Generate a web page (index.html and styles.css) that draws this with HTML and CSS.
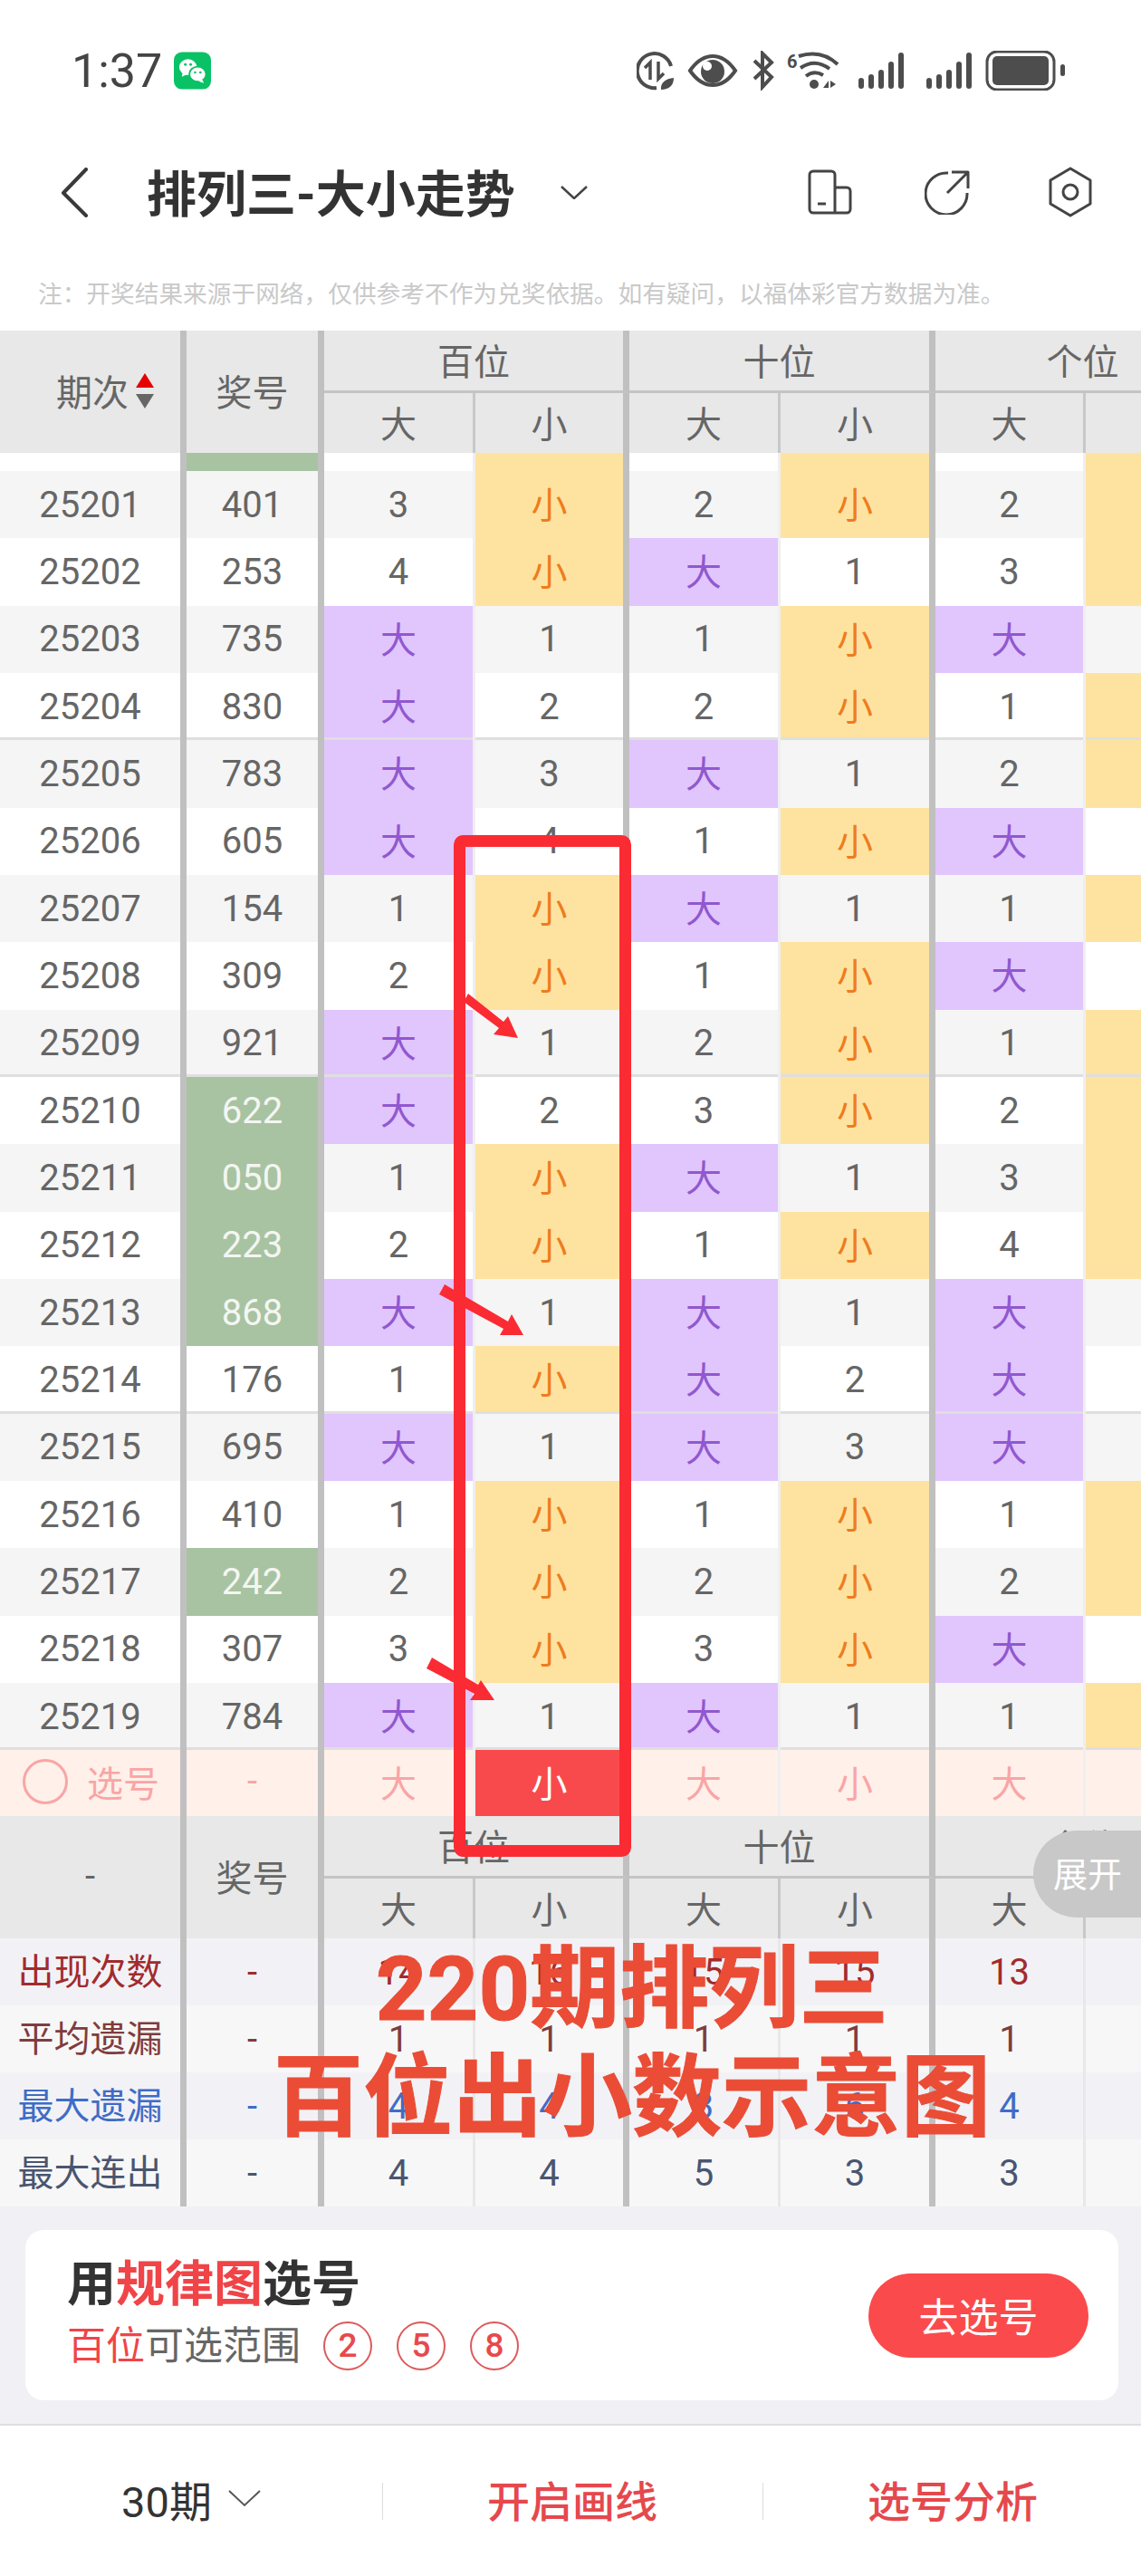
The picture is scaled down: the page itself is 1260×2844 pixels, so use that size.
FILE: index.html
```html
<!DOCTYPE html>
<html lang="zh-CN">
<head>
    <meta charset="UTF-8">
    <title>排列三-大小走势</title>
    <link rel="stylesheet" href="styles.css">
</head>
<body>
<div class="page">
    <div class="status">
        <span class="clock">1:37</span>
        <svg class="wechat" viewBox="0 0 42 42">
            <rect width="42" height="42" rx="9" fill="#0ac266"/>
            <ellipse cx="16" cy="17" rx="10" ry="9" fill="#fff"/>
            <path d="M10 23l-1 5 6-3z" fill="#fff"/>
            <ellipse cx="27" cy="25" rx="9.500" ry="8.500" fill="#fff" stroke="#0ac266" stroke-width="2"/>
            <path d="M32 31l2 4-6-2z" fill="#fff"/>
            <circle cx="13" cy="14" r="1.500" fill="#0ac266"/><circle cx="19" cy="14" r="1.500" fill="#0ac266"/>
            <circle cx="24" cy="23" r="1.300" fill="#0ac266"/><circle cx="30" cy="23" r="1.300" fill="#0ac266"/>
        </svg>
        <svg class="status-icons" viewBox="0 0 474 44" fill="none" stroke="#4d4d4d" stroke-width="4">
            <path d="M38 17A19 19 0 1 0 22 41"/>
            <path d="M15 32V13L9 19M24 12V31L30 25" stroke-width="3.500"/>
            <path d="M27 43C26 35 32 31 41 30C41 38 36 43 27 43Z" fill="#4d4d4d" stroke="none"/>
            <path d="M59 22C68 9 77 6 84 6C91 6 100 9 109 22C100 35 91 38 84 38C77 38 68 35 59 22Z"/>
            <circle cx="84" cy="23" r="13" fill="#4d4d4d" stroke="none"/>
            <circle cx="78" cy="17" r="5" fill="#fff" stroke="none"/>
            <path d="M130 11L149 29L139 40V3L149 13L130 31"/>
            <text x="166" y="19" font-size="20" font-weight="700" font-family="Roboto" fill="#4d4d4d" stroke="none">6</text>
            <path d="M179 6Q204 -2 222 15M181 19Q197 8 213 20M187 28Q196 21 206 27"/>
            <circle cx="196" cy="37" r="5" fill="#4d4d4d" stroke="none"/>
            <path d="M212 33V41H206ZM214 33V41L220 37Z" fill="#4d4d4d" stroke="none"/>
            <g fill="#4d4d4d" stroke="none">
                <rect x="245" y="30" width="6" height="12" rx="3"/><rect x="256" y="26" width="6" height="16" rx="3"/>
                <rect x="267" y="21" width="6" height="21" rx="3"/><rect x="278" y="12" width="6" height="30" rx="3"/>
                <rect x="289" y="2" width="6" height="40" rx="3"/>
                <rect x="320" y="30" width="6" height="12" rx="3"/><rect x="331" y="26" width="6" height="16" rx="3"/>
                <rect x="342" y="21" width="6" height="21" rx="3"/><rect x="353" y="12" width="6" height="30" rx="3"/>
                <rect x="364" y="2" width="6" height="40" rx="3"/>
                <rect x="393" y="6" width="62" height="32" rx="5"/>
                <rect x="468" y="15" width="5" height="13" rx="2.500"/>
            </g>
            <rect x="387" y="1" width="74" height="42" rx="11" stroke-width="3"/>
        </svg>
    </div>

    <div class="nav">
        <svg class="back" viewBox="0 0 30 55" fill="none" stroke="#3a3a3a" stroke-width="4" stroke-linecap="round" stroke-linejoin="round">
            <path d="M28 2L3 28L28 53"/>
        </svg>
        <h1 class="nav-title">排列三-大小走势</h1>
        <svg class="nav-caret" viewBox="0 0 30 15" fill="none" stroke="#444" stroke-width="2.500"><path d="M1 1L15 14L29 1"/></svg>
        <div class="nav-tools">
            <svg class="tool-device" viewBox="0 0 49 50" fill="none" stroke="#444" stroke-width="3">
                <path d="M30 48H6a4 4 0 0 1-4-4V6a4 4 0 0 1 4-4h20a4 4 0 0 1 4 4V48ZM30 20H43a4 4 0 0 1 4 4V44a4 4 0 0 1-4 4H30"/>
                <path d="M11 38H20"/>
            </svg>
            <svg class="tool-share" viewBox="0 0 50 50" fill="none" stroke="#444" stroke-width="3" stroke-linejoin="round">
                <path d="M26 4A23 23 0 1 0 47 26"/>
                <path d="M25 26L48 3M30 3H48V21"/>
            </svg>
            <svg class="tool-hex" viewBox="0 0 50 56" fill="none" stroke="#444" stroke-width="3" stroke-linejoin="round">
                <path d="M25 2L47 15V41L25 54L3 41V15Z"/>
                <circle cx="25" cy="28" r="8"/>
            </svg>
        </div>
    </div>

    <p class="note">注：开奖结果来源于网络，仅供参考不作为兑奖依据。如有疑问，以福体彩官方数据为准。</p>

    <div class="thead">
        <div class="th th-tall th-sort">期次
            <span class="sort"><i class="sort-up"></i><i class="sort-down"></i></span>
        </div>
        <div class="th th-tall">奖号</div>
        <div class="th th-group">百位</div>
        <div class="th th-group">十位</div>
        <div class="th th-group">个位</div>
        <div class="th th-sub">大</div><div class="th th-sub">小</div>
        <div class="th th-sub">大</div><div class="th th-sub">小</div>
        <div class="th th-sub">大</div><div class="th th-sub">小</div>
    </div>

    <div id="rows"></div>

    <div class="trow pick-row">
        <div class="c pick-label"><span class="pick-circle"></span>选号</div>
        <div class="c">-</div>
        <div class="c">大</div>
        <div class="c pick-on">小</div>
        <div class="c">大</div>
        <div class="c">小</div>
        <div class="c">大</div>
        <div class="c">小</div>
    </div>

    <div class="thead">
        <div class="th th-tall">-</div>
        <div class="th th-tall">奖号</div>
        <div class="th th-group">百位</div>
        <div class="th th-group">十位</div>
        <div class="th th-group">个位</div>
        <div class="th th-sub">大</div><div class="th th-sub">小</div>
        <div class="th th-sub">大</div><div class="th th-sub">小</div>
        <div class="th th-sub">大</div><div class="th th-sub">小</div>
    </div>

    <div id="stats"></div>

    <div class="lower">
        <div class="card">
            <div class="card-text">
                <div class="card-title">用<em>规律图</em>选号</div>
                <div class="card-sub"><em>百位</em>可选范围
                    <span class="ball">2</span><span class="ball">5</span><span class="ball">8</span>
                </div>
            </div>
            <div class="card-btn">去选号</div>
        </div>
    </div>

    <div class="bottom">
        <div class="bottom-item">30期
            <svg class="bottom-caret" viewBox="0 0 36 20" fill="none" stroke="#555" stroke-width="2"><path d="M1 2L18 18L35 2"/></svg>
        </div>
        <div class="bottom-item bottom-red">开启画线</div>
        <div class="bottom-item bottom-red">选号分析</div>
    </div>

    <!-- 手工标注层 -->
    <svg class="marks" viewBox="0 0 1260 2844">
        <rect x="507.500" y="928.500" width="183" height="1115" rx="4" fill="none" stroke="#fb2b34" stroke-width="13"/>
        <g fill="#fb2b34">
            <path d="M517 1097L556 1128L561 1122L572 1146L545 1142L551 1135L512 1106Z"/>
            <path d="M491 1418L561 1459L565 1451L578 1474L552 1474L556 1467L485 1429Z"/>
            <path d="M477 1830L528 1860L531 1855L546 1877L519 1877L524 1870L471 1842Z"/>
        </g>
    </svg>
    <div class="mark-text">220期排列三<br>百位出小数示意图</div>

    <div class="expand">展开</div>
</div>

<script>
    // 期次, 奖号, 是否绿色, 百大, 百小, 十大, 十小, 个大, 个小
    const dados = [
        ['25201', '401', 0, '3', '小', '2', '小', '2', '小'],
        ['25202', '253', 0, '4', '小', '大', '1', '3', '小'],
        ['25203', '735', 0, '大', '1', '1', '小', '大', '1'],
        ['25204', '830', 0, '大', '2', '2', '小', '1', '小'],
        ['25205', '783', 0, '大', '3', '大', '1', '2', '小'],
        ['25206', '605', 0, '大', '4', '1', '小', '大', '1'],
        ['25207', '154', 0, '1', '小', '大', '1', '1', '小'],
        ['25208', '309', 0, '2', '小', '1', '小', '大', '1'],
        ['25209', '921', 0, '大', '1', '2', '小', '1', '小'],
        ['25210', '622', 1, '大', '2', '3', '小', '2', '小'],
        ['25211', '050', 1, '1', '小', '大', '1', '3', '小'],
        ['25212', '223', 1, '2', '小', '1', '小', '4', '小'],
        ['25213', '868', 1, '大', '1', '大', '1', '大', '1'],
        ['25214', '176', 0, '1', '小', '大', '2', '大', '2'],
        ['25215', '695', 0, '大', '1', '大', '3', '大', '3'],
        ['25216', '410', 0, '1', '小', '1', '小', '1', '小'],
        ['25217', '242', 1, '2', '小', '2', '小', '2', '小'],
        ['25218', '307', 0, '3', '小', '3', '小', '大', '1'],
        ['25219', '784', 0, '大', '1', '大', '1', '1', '小']
    ];

    const estatisticas = [
        ['出现次数', 'st-red', '-', '14', '16', '15', '15', '13', '17'],
        ['平均遗漏', 'st-brown', '-', '1', '1', '1', '1', '1', '1'],
        ['最大遗漏', 'st-blue', '-', '4', '4', '3', '6', '4', '3'],
        ['最大连出', 'st-slate', '-', '4', '4', '5', '3', '3', '4']
    ];

    function celula(v) {
        if (v === '大') return '<div class="c big">大</div>';
        if (v === '小') return '<div class="c small">小</div>';
        return `<div class="c">${v}</div>`;
    }

    const rows = document.getElementById('rows');
    let html = `<div class="trow spacer"><div class="c"></div><div class="c hit"></div><div class="c"></div><div class="c small"></div><div class="c"></div><div class="c small"></div><div class="c"></div><div class="c small"></div></div>`;
    dados.forEach((d, i) => {
        const sep = i % 5 === 3 ? ' sep' : '';
        html += `<div class="trow${i % 2 === 0 ? ' odd' : ''}${sep}">
            <div class="c">${d[0]}</div>
            <div class="c${d[2] ? ' hit' : ''}">${d[1]}</div>
            ${d.slice(3).map(celula).join('')}
        </div>`;
    });
    rows.innerHTML = html;

    document.getElementById('stats').innerHTML = estatisticas.map((s, i) => `
        <div class="trow stat-row ${s[1]}${i % 2 === 0 ? ' stat-tint' : ''}">
            <div class="c">${s[0]}</div>
            ${s.slice(2).map(v => `<div class="c">${v}</div>`).join('')}
        </div>`).join('');
</script>
</body>
</html>
```

FILE: styles.css
```css
* { box-sizing: border-box; }
body { margin: 0; background: #fff; font-family: Roboto, "Noto Sans CJK SC", sans-serif; color: #666; }
.page { position: relative; width: 1260px; height: 2844px; overflow: hidden; background: #fff; }

/* status bar */
.status { display: flex; align-items: center; height: 156px; padding-left: 79px; }
.clock { font-size: 52px; color: #444; width: 113px; }
.wechat { width: 41px; height: 42px; }
.status-icons { width: 474px; height: 44px; margin-left: 470px; }

/* nav */
.nav { display: flex; align-items: center; height: 112px; padding-left: 67px; }
.back { width: 30px; height: 55px; }
.nav-title { margin: 0 0 5px 65px; font-size: 55px; font-weight: 700; color: #333; white-space: nowrap; }
.nav-caret { width: 30px; height: 15px; margin-left: 50px; }
.nav-tools { display: flex; align-items: center; margin-left: auto; padding-right: 53px; }
.tool-device { width: 49px; height: 50px; }
.tool-share { width: 50px; height: 50px; margin-left: 80px; }
.tool-hex { width: 50px; height: 56px; margin-left: 86px; }

.note { margin: 0; height: 97px; padding: 37px 0 0 42px; font-size: 26.700px; line-height: 40px; color: #c9c9c9; white-space: nowrap; }

/* table */
.thead, .trow { display: grid; width: 1365px; grid-template-columns: 206px 152px 167px 170px 167px 171px 166px 166px; }
.thead { grid-template-rows: 69px 66px; background: #e8e8e8; }
.th { display: flex; align-items: center; justify-content: center; padding-bottom: 3px; font-size: 40px; color: #666; border-right: 7px solid #c0c0c0; }
.th-tall { grid-row: span 2; }
.th-group { grid-column: span 2; border-bottom: 3px solid #c4c4c4; }
.th-sub:nth-child(2n) { border-right: 3px solid #c8c8c8; }
.th-sub:last-child { border-right: 0; }
.th-sort { justify-content: flex-start; padding-left: 62px; }
.sort { display: flex; flex-direction: column; gap: 7px; margin-left: 8px; }
.sort i { display: block; width: 0; height: 0; border-left: 10px solid transparent; border-right: 10px solid transparent; }
.sort-up { border-bottom: 16px solid #e60000; }
.sort-down { border-top: 16px solid #666; }

.trow { height: 74.330px; background: #fff; }
.c { display: flex; align-items: center; justify-content: center; font-size: 40px; color: #666; border-right: 3px solid #efefef; }
.c:nth-child(1), .c:nth-child(2), .c:nth-child(4), .c:nth-child(6) { border-right: 7px solid #c0c0c0; }
.c:nth-child(8) { border-right: 0; }
.trow.odd { background: #f5f5f5; }
.trow.spacer { height: 20px; }
.sep .c { box-shadow: inset 0 -3px 0 #dfdfdf; }
.c.big { padding-bottom: 4px; background-color: #e1c5fd; background-clip: padding-box; color: #9058cf; }
.c.small { padding-bottom: 4px; background-color: #fee3a0; background-clip: padding-box; color: #ee7c1e; }
.c.hit { background-color: #a8c3a1; background-clip: padding-box; color: #f4f6f2; }

.pick-row { height: 73px; background: #fff0ea; }
.pick-row .c { padding-bottom: 4px; color: #f9a5a5; }
.pick-row .c.pick-label { justify-content: flex-start; padding-left: 25px; }
.pick-row .c.pick-on { background: #f84a4c; background-clip: padding-box; color: #fff; }
.pick-circle { width: 50px; height: 50px; margin-right: 21px; border: 3px solid #f9a5a5; border-radius: 50%; }

.stat-row { height: 74px; background: #f7f7f7; }
.stat-row.stat-tint { background: #f2f2f6; }
.stat-row .c:first-child { padding-bottom: 6px; }
.st-red .c { color: #a22b2d; }
.st-brown .c { color: #7e3d3e; }
.st-blue .c { color: #3f6cc6; }
.st-slate .c { color: #4a5570; }
.stat-row .c:nth-child(3), .stat-row .c:nth-child(5), .stat-row .c:nth-child(7) { border-right-color: #e8e8e8; }

/* card */
.lower { height: 240px; padding: 26px 25px 0 28px; background: #f0f0f5; }
.card { display: flex; align-items: center; justify-content: space-between; height: 188px; padding: 0 33px 0 46px; background: #fff; border-radius: 20px; }
.card-text { display: flex; flex-direction: column; gap: 6px; }
.card-title { margin-top: -4px; font-size: 54px; line-height: 66px; font-weight: 700; color: #333; }
.card-title em, .card-sub em { font-style: normal; color: #f04448; }
.card-sub { display: flex; align-items: center; font-size: 43px; line-height: 56px; color: #666; }
.ball { display: flex; align-items: center; justify-content: center; width: 54px; height: 54px; margin-left: 27px; border: 2px solid #dc5a5c; border-radius: 50%; font-size: 37px; font-weight: 500; color: #e8494c; }
.ball:first-of-type { margin-left: 25px; }
.card-btn { display: flex; align-items: center; justify-content: center; width: 243px; height: 93px; border-radius: 47px; background: #fb4a4c; color: #fff; font-size: 44px; }

/* bottom bar */
.bottom { display: flex; height: 167px; border-top: 2px solid #dedede; background: #fff; }
.bottom-item { position: relative; display: flex; flex: 0 0 420px; align-items: center; justify-content: center; padding-bottom: 5px; font-size: 47px; color: #333; }
.bottom-item:first-child { flex-basis: 422px; }
.bottom-item + .bottom-item::before { content: ""; position: absolute; left: 0; top: 63px; height: 41px; border-left: 1px solid #ddd; }
.bottom-red { color: #e5484d; font-weight: 500; }
.bottom-caret { width: 36px; height: 20px; margin-left: 18px; }

/* annotation layer */
.marks { position: absolute; left: 0; top: 0; width: 1260px; height: 2844px; }
.mark-text { position: absolute; left: 200px; top: 2136px; width: 996px; text-align: center; font-size: 99px; line-height: 120px; font-weight: 700; color: #ea4c36; -webkit-text-stroke: 1px #ea4c36; }
.expand { position: absolute; right: 0; top: 2021px; display: flex; align-items: center; padding: 0 0 5px 22px; width: 119px; height: 96px; border-radius: 48px 0 0 48px; background: #c8c8c8; color: #fff; font-size: 38px; }
```
